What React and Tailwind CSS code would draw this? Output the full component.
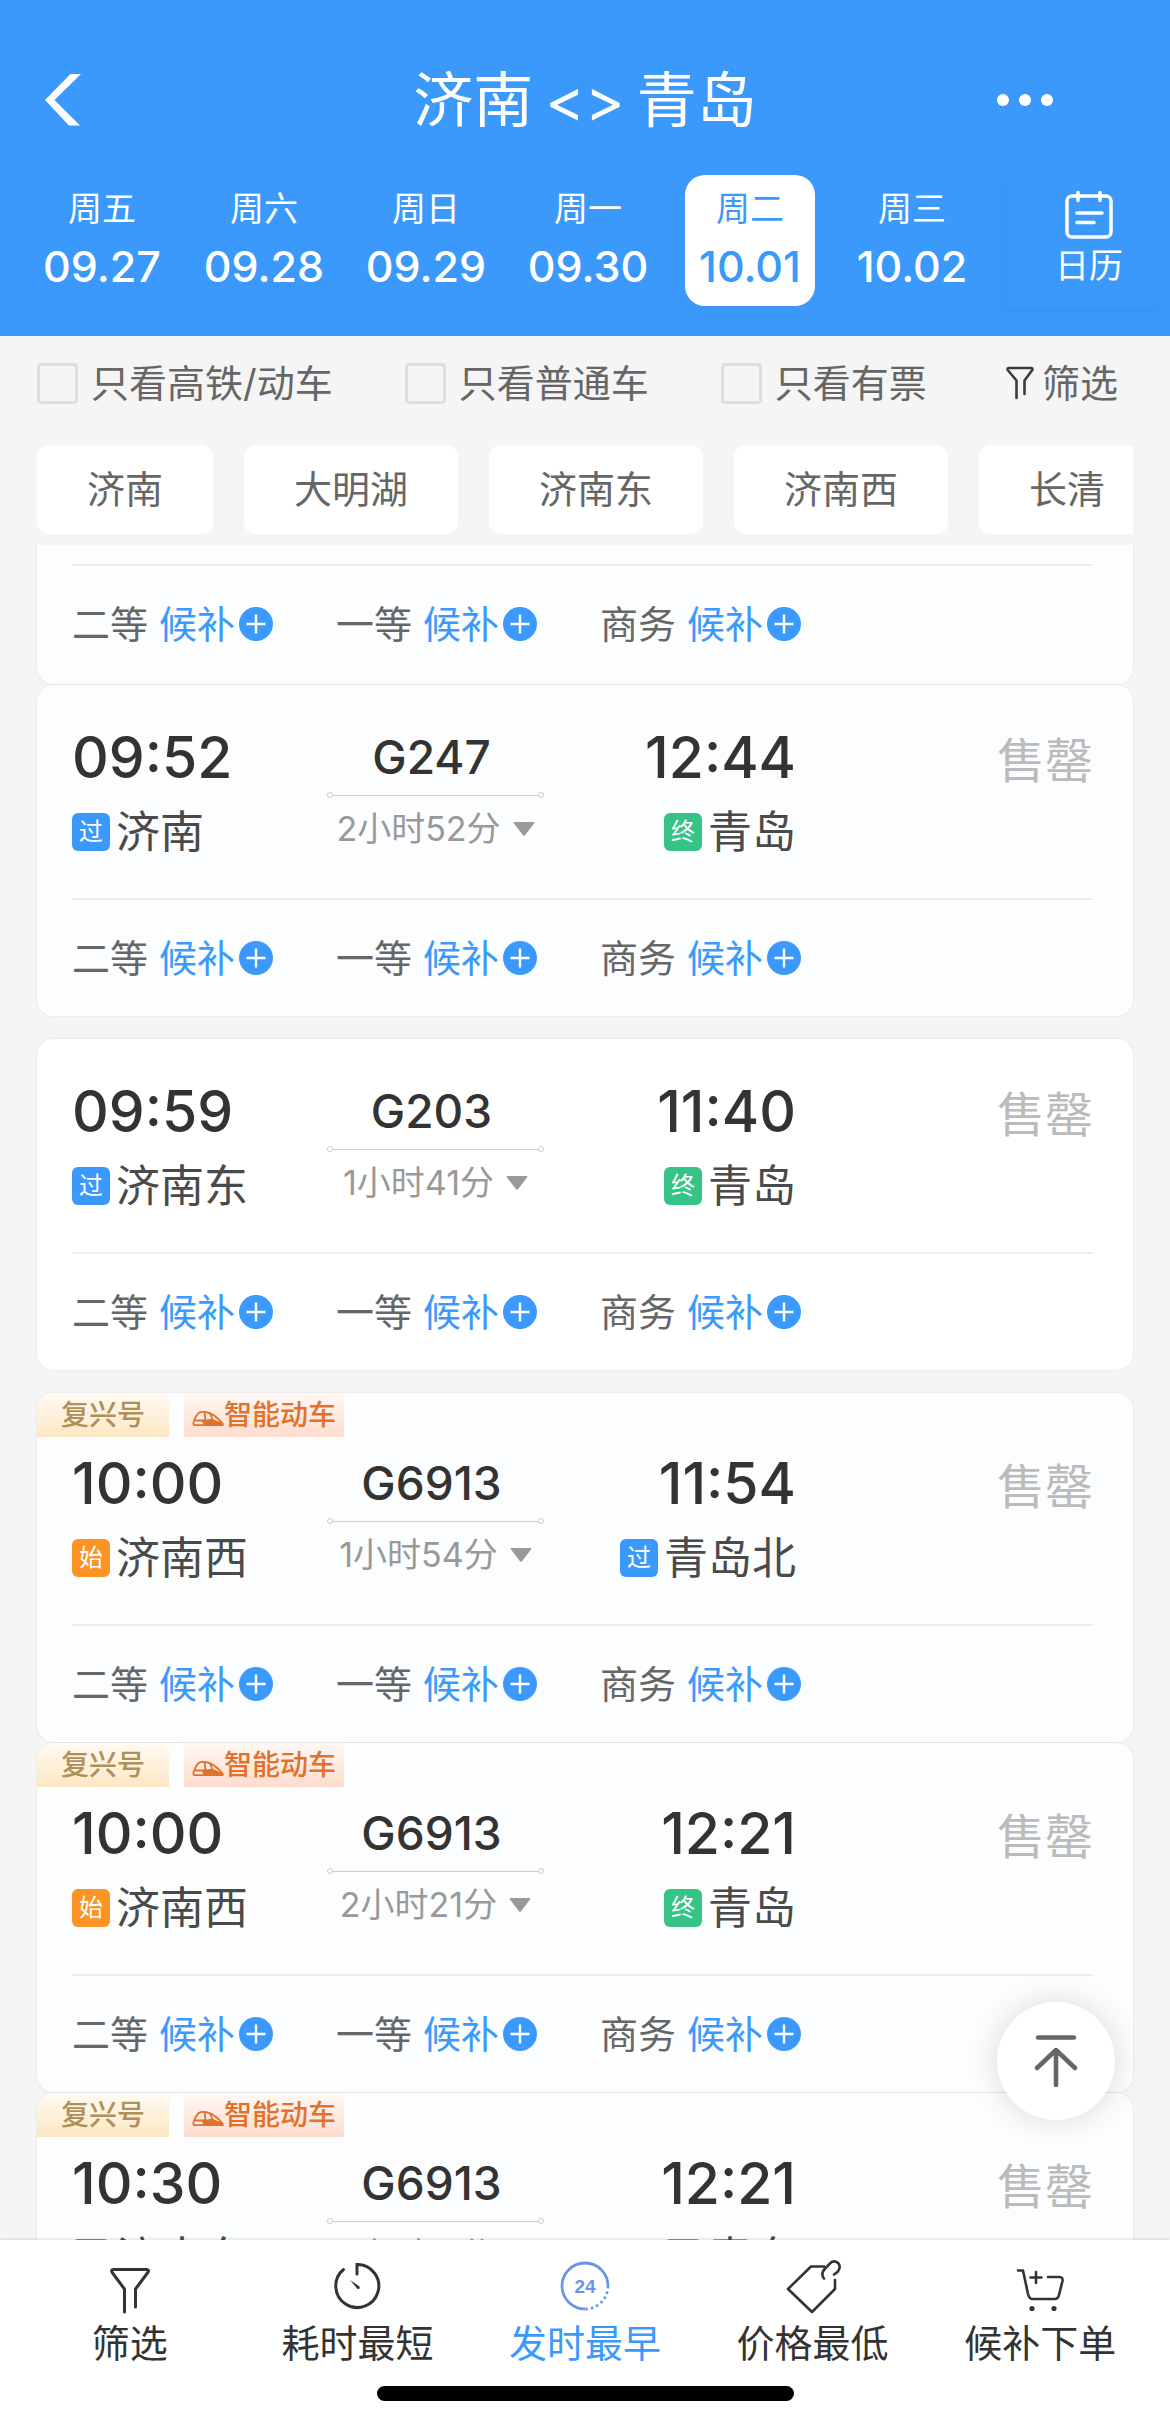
import { useState } from "react";

const days = [
  { week: "周五", date: "09.27" },
  { week: "周六", date: "09.28" },
  { week: "周日", date: "09.29" },
  { week: "周一", date: "09.30" },
  { week: "周二", date: "10.01" },
  { week: "周三", date: "10.02" }
];

const filters = ["只看高铁/动车", "只看普通车", "只看有票"];

const stations = ["济南", "大明湖", "济南东", "济南西", "长清"];

const seats = ["二等", "一等", "商务"];

const trainGroups = [
  [
    { id: 1, partial: true, seats },
    {
      id: 2,
      start: "09:52",
      end: "12:44",
      code: "G247",
      duration: "2小时52分",
      from: { type: "过", name: "济南" },
      to: { type: "终", name: "青岛" },
      seats
    }
  ],
  [
    {
      id: 3,
      plain: true,
      start: "09:59",
      end: "11:40",
      code: "G203",
      duration: "1小时41分",
      from: { type: "过", name: "济南东" },
      to: { type: "终", name: "青岛" },
      seats
    }
  ],
  [
    {
      id: 4,
      tagged: true,
      start: "10:00",
      end: "11:54",
      code: "G6913",
      duration: "1小时54分",
      from: { type: "始", name: "济南西" },
      to: { type: "过", name: "青岛北" },
      seats
    },
    {
      id: 5,
      tagged: true,
      start: "10:00",
      end: "12:21",
      code: "G6913",
      duration: "2小时21分",
      from: { type: "始", name: "济南西" },
      to: { type: "终", name: "青岛" },
      seats
    },
    {
      id: 6,
      tagged: true,
      start: "10:30",
      end: "12:21",
      code: "G6913",
      duration: "1小时51分",
      from: { type: "过", name: "济南东" },
      to: { type: "终", name: "青岛" },
      seats: []
    }
  ]
];

const badgeColors = {
  过: "bg-[#3b99fc]",
  终: "bg-[#35c485]",
  始: "bg-[#fb9325]"
};

const CalendarIcon = () => (
  <svg width="48" height="48" viewBox="0 0 48 48" fill="none" stroke="currentColor" strokeWidth="3.5" strokeLinecap="round">
    <rect x="2" y="5" width="44" height="41" rx="5" />
    <path d="M13 1.5v8M35 1.5v8" />
    <path d="M12 22h25M12 31.500h17" />
  </svg>
);

const SmallFunnelIcon = () => (
  <svg width="28" height="34" viewBox="0 0 28 34" fill="none" stroke="#3c3c3c" strokeWidth="2.600" strokeLinecap="round" strokeLinejoin="round">
    <path d="M18.500 28V14.500L26.300 4Q27 2 25 2H3Q1 2 1.700 4L10.500 14.500V32" />
  </svg>
);

const TrainIcon = () => (
  <svg width="32" height="28" viewBox="0 0 32 28" fill="none" stroke="#e0722c" strokeWidth="1.800" strokeLinejoin="round">
    <path d="M1.500 21.500C3 17 5.500 12 8.500 11.200Q10 10.800 13 11C19 11.500 26 17 30.500 22.500V24.200H2.500Q1 24 1.500 21.500z" />
    <path d="M3 19.500h8l2.500-.8L12.500 11M18 12.500l2.500 5.500" />
    <path d="M11 20.500l9-2 10.500 4.500v1.200H13z" fill="#e0722c" />
  </svg>
);

const PlusIcon = () => (
  <svg width="34" height="34" viewBox="0 0 34 34">
    <circle cx="17" cy="17" r="17" fill="#3b99fc" />
    <path d="M7.500 17h19M17 7.500v19" stroke="#fff" strokeWidth="2.400" />
  </svg>
);

const FunnelIcon = () => (
  <svg width="64" height="56" viewBox="0 0 64 56" fill="none" stroke="#333" strokeWidth="3" strokeLinecap="round" strokeLinejoin="round">
    <path d="M37.500 47V29L49.800 12.500Q51.500 9.500 48.500 9.500H15.500Q12.500 9.500 14.200 12.500L26.500 29V52" />
  </svg>
);

const TimerIcon = () => (
  <svg width="64" height="56" viewBox="0 0 64 56" fill="none" stroke="#333" strokeWidth="3" strokeLinecap="round">
    <path d="M32 14V4.500A21.500 21.500 0 1 1 18.500 9.500" />
    <path d="M25 20l9.500 6.500q1 3-2 2.500z" fill="#333" stroke="none" />
  </svg>
);

const ClockIcon = () => (
  <svg width="64" height="56" viewBox="0 0 64 56" fill="none" stroke="#6c95ea" strokeWidth="2.800">
    <path d="M32 49A23 23 0 1 1 55 26" />
    <path d="M55 26A23 23 0 0 1 32 49" strokeDasharray="2.500 3" />
    <text x="32" y="33" textAnchor="middle" fontFamily="Liberation Sans" fontSize="19" fontWeight="700" fill="#6c95ea" stroke="none">
      24
    </text>
  </svg>
);

const PriceIcon = () => (
  <svg width="64" height="56" viewBox="0 0 64 56" fill="none" stroke="#333" strokeWidth="2.600" strokeLinecap="round" strokeLinejoin="round">
    <path d="M43 6.500H30L7 29L31 52L54 29V20" />
    <path d="M43 18.500C40 15 41.500 11 45 7.500L49.500 3C53 -.5 59.500 2.500 58.500 8C58 11 55.500 13 53 14.500" />
  </svg>
);

const CartIcon = () => (
  <svg width="64" height="56" viewBox="0 0 64 56" fill="none" stroke="#333" strokeWidth="2.600" strokeLinecap="round" strokeLinejoin="round">
    <path d="M10 10.500h5L20 34q1.500 5 4 5h23q3 0 4-4l3.500-14q.5-4-3-4H40" />
    <path d="M28 12v11M22.500 17.500h11" />
    <circle cx="24" cy="48.500" r="2.600" fill="#333" stroke="none" />
    <circle cx="46" cy="48.500" r="2.600" fill="#333" stroke="none" />
  </svg>
);

const sortItems = [
  { label: "筛选", icon: FunnelIcon },
  { label: "耗时最短", icon: TimerIcon },
  { label: "发时最早", icon: ClockIcon },
  { label: "价格最低", icon: PriceIcon },
  { label: "候补下单", icon: CartIcon }
];

const Station = ({ station }) => (
  <div className="flex items-center gap-[6px]">
    <span className={`flex size-[38px] items-center justify-center rounded-md text-2xl text-white ${badgeColors[station.type]}`}>
      {station.type}
    </span>
    <span className="text-[44px] leading-[44px] text-[#4a4a4a]">{station.name}</span>
  </div>
);

const SeatRow = ({ items }) => (
  <div className="box-content flex h-[116px] items-center gap-[63px] border-t-2 border-[#ededf0] text-[38px] leading-[44px]">
    {items.map((seat) => (
      <div key={seat} className="flex items-center gap-[11px] text-[#666]">
        <span>{seat}</span>
        <button type="button" className="flex items-center gap-1 text-[#3b99fc]">
          候补
          <PlusIcon />
        </button>
      </div>
    ))}
  </div>
);

const TrainCard = ({ train }) => {
  if (train.partial) {
    return (
      <article className="rounded-b-2xl bg-[#fcfdff] pt-[19px] pr-10 pb-[2px] pl-[35px] shadow-[0_0_2px_rgba(0,0,0,0.12)]">
        <SeatRow items={train.seats} />
      </article>
    );
  }

  return (
    <article
      className={`overflow-hidden rounded-2xl shadow-[0_0_2px_rgba(0,0,0,0.12)] ${train.plain ? "bg-white" : "bg-[#fcfdff]"}`}
    >
      {train.tagged && (
        <div className="flex h-11 gap-[15px] text-[28px]">
          <span className="flex items-center bg-linear-to-b from-[#fffaf3] to-[#fde7c3] px-6 font-medium text-[#b0905a]">复兴号</span>
          <span className="flex items-center bg-linear-to-b from-[#fff8f5] to-[#fddccd] px-2 font-medium text-[#e0722c]">
            <TrainIcon />
            智能动车
          </span>
        </div>
      )}

      <div className={`pr-10 pl-[35px] ${train.tagged ? "pt-4" : "pt-[42px]"}`}>
        <div className="flex justify-between pb-11">
          <div className="flex w-[255px] flex-col gap-[21px]">
            <time className="text-[57px] leading-[62px] font-medium text-[#333]">{train.start}</time>
            <Station station={train.from} />
          </div>

          <div className="flex w-[217px] flex-col items-center">
            <span className="pr-2 text-[46px] leading-[60px] font-medium text-[#333]">{train.code}</span>
            <div className="mt-[5px] flex w-full items-center">
              <span className="size-[6px] rounded-full border border-[#ccc]" />
              <span className="h-px flex-1 bg-[#ccc]" />
              <span className="size-[6px] rounded-full border border-[#ccc]" />
            </div>
            <button type="button" className="mt-[9px] flex items-center gap-3 text-[34px] leading-[44px] text-[#999]">
              {train.duration}
              <svg width="22" height="14" viewBox="0 0 22 14" fill="#999">
                <path d="M1.500 0h19q1.500 0 .7 1.300L12 13.200q-1 1.300-2 0L.8 1.300Q0 0 1.500 0z" />
              </svg>
            </button>
          </div>

          <div className="flex w-[252px] flex-col items-end gap-[21px]">
            <time className="text-[57px] leading-[62px] font-medium text-[#333]">{train.end}</time>
            <Station station={train.to} />
          </div>

          <span className="flex-1 text-right text-5xl leading-[68px] text-[#bbb]">售罄</span>
        </div>
        {train.seats.length > 0 && <SeatRow items={train.seats} />}
      </div>
    </article>
  );
};

const App = () => {
  const [activeDay, setActiveDay] = useState("10.01");
  const [activeSort, setActiveSort] = useState("发时最早");

  return (
    <div className="flex h-screen flex-col bg-[#f5f5f5] font-['Inter','Noto_Sans_CJK_SC',sans-serif]">
      <header className="bg-[#3b99fc] pt-[62px] pb-[30px] text-white">
        <div className="grid h-[76px] grid-cols-[1fr_auto_1fr] items-center">
          <button type="button" aria-label="返回" className="justify-self-start pl-11">
            <svg width="38" height="52" viewBox="0 0 38 52" fill="currentColor">
              <path d="M37 0H26.500L1 26l24 25.500h11L10.500 26z" />
            </svg>
          </button>
          <h1 className="flex gap-3 text-[60px] leading-[76px]">
            <span>济南</span>
            <span>&lt;&gt;</span>
            <span>青岛</span>
          </h1>
          <button type="button" aria-label="更多" className="flex gap-[10px] justify-self-end pr-[117px]">
            <span className="size-3 rounded-full bg-white" />
            <span className="size-3 rounded-full bg-white" />
            <span className="size-3 rounded-full bg-white" />
          </button>
        </div>

        <nav className="mt-[37px] flex h-[131px] pl-[21px]">
          {days.map((day) => (
            <button
              key={day.date}
              type="button"
              onClick={() => setActiveDay(day.date)}
              className={`mx-4 flex flex-1 flex-col items-center rounded-[20px] pt-3 ${
                activeDay === day.date ? "bg-white text-[#3b99fc]" : ""
              }`}
            >
              <span className="text-[34px] leading-[44px]">{day.week}</span>
              <span className="mt-[7px] text-[43px] leading-[56px] font-medium">{day.date}</span>
            </button>
          ))}
          <button
            type="button"
            className="ml-[15px] flex w-[162px] flex-col items-center pt-4 text-[34px] leading-[44px] shadow-[-6px_8px_12px_rgba(0,60,140,0.04)]"
          >
            <CalendarIcon />
            <span className="mt-[5px]">日历</span>
          </button>
        </nav>
      </header>

      <div className="flex h-[94px] items-center gap-[72px] pr-[52px] pl-[37px] text-[38px] leading-[44px] text-[#666]">
        {filters.map((filter) => (
          <label key={filter} className="flex items-center gap-[13px]">
            <input type="checkbox" className="size-[41px] appearance-none rounded border-[3px] border-[#dedede] checked:bg-[#3b99fc]" />
            {filter}
          </label>
        ))}
        <button type="button" className="ml-auto flex items-center gap-2">
          <SmallFunnelIcon />
          筛选
        </button>
      </div>

      <div className="mx-[37px] mt-[15px] flex gap-[31px] overflow-hidden text-[38px] text-[#666]">
        {stations.map((station) => (
          <button key={station} type="button" className="h-[89px] shrink-0 rounded-xl bg-white px-[50px]">
            {station}
          </button>
        ))}
      </div>

      <main className="relative mt-[11px] min-h-0 flex-1 overflow-hidden px-[37px]">
        <div className="flex flex-col gap-[23px]">
          {trainGroups.map((group) => (
            <div key={group[0].id} className="flex flex-col gap-px">
              {group.map((train) => (
                <TrainCard key={train.id} train={train} />
              ))}
            </div>
          ))}
        </div>

        <button
          type="button"
          aria-label="回到顶部"
          className="absolute right-[55px] bottom-[120px] flex size-[118px] items-center justify-center rounded-full bg-white shadow-[0_0_32px_rgba(0,0,0,0.14)]"
        >
          <svg width="44" height="54" viewBox="0 0 44 54" fill="none" stroke="#666" strokeWidth="4.500" strokeLinecap="round" strokeLinejoin="round">
            <path d="M4 3.500h36" />
            <path d="M22 51V16M3 34l19-18 19 18" />
          </svg>
        </button>
      </main>

      <footer className="relative bg-white pt-5 pb-6 shadow-[0_-1px_3px_rgba(0,0,0,0.12)]">
        <nav className="flex px-4">
          {sortItems.map((item) => {
            const Icon = item.icon;

            return (
              <button
                key={item.label}
                type="button"
                onClick={() => setActiveSort(item.label)}
                className={`flex flex-1 flex-col items-center gap-[5px] text-[38px] leading-[44px] ${
                  activeSort === item.label ? "text-[#3b99fc]" : "text-[#333]"
                }`}
              >
                <Icon />
                {item.label}
              </button>
            );
          })}
        </nav>
        <div className="mx-auto mt-[21px] h-[15px] w-[417px] rounded-full bg-black" />
      </footer>
    </div>
  );
};

export default App;
